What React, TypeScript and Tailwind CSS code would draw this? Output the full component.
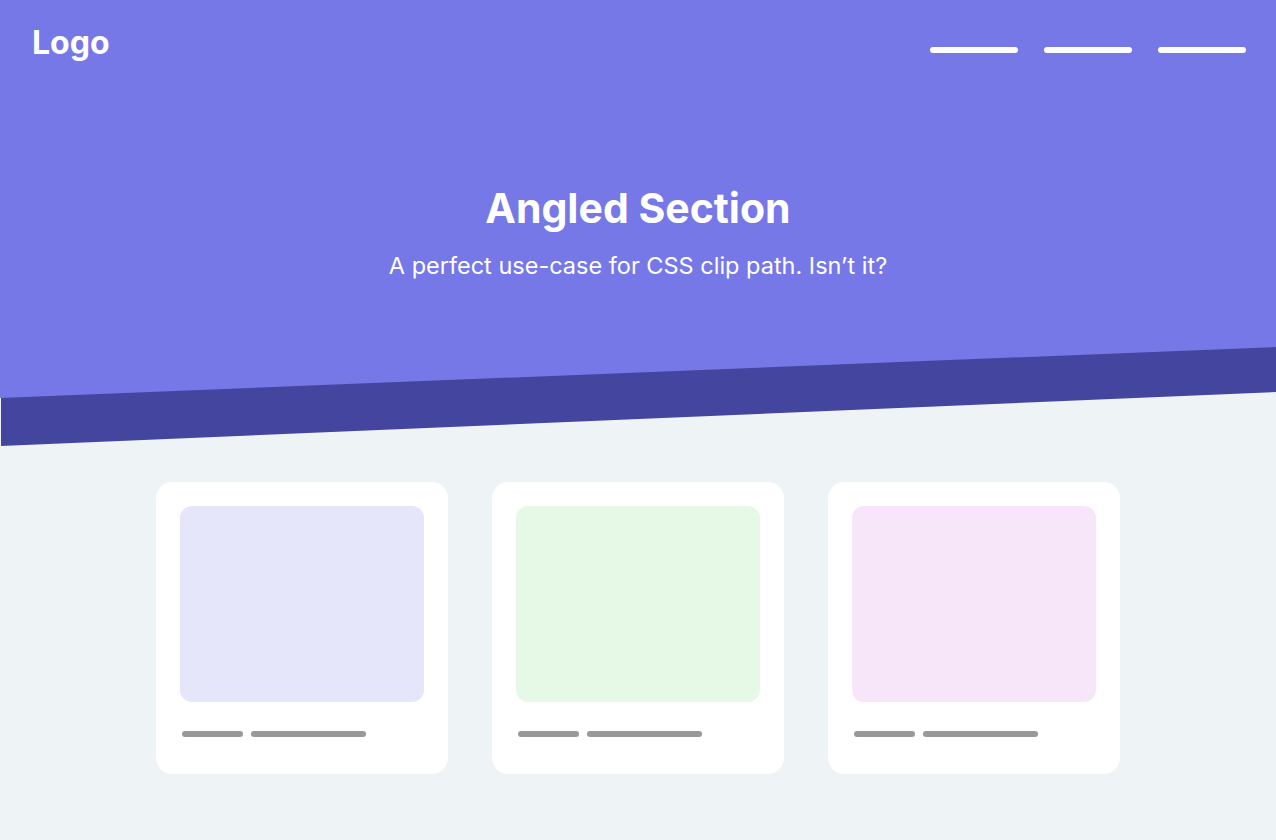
const cards = [
  { id: 1, tint: 'bg-[#e5e6f9]' },
  { id: 2, tint: 'bg-[#e6f9e6]' },
  { id: 3, tint: 'bg-[#f7e6f9]' },
];

function Card({ tint }: { tint: string }) {
  return (
    <div className="w-[292px] h-[292px] rounded-2xl bg-white p-6">
      <div className={`h-[196px] rounded-xl ${tint}`} />
      <div className="mt-[29px] flex items-center gap-2 pl-[2px]">
        <span className="h-[6px] w-[61px] rounded-full bg-[#999999]" />
        <span className="h-[6px] w-[115px] rounded-full bg-[#999999]" />
      </div>
    </div>
  );
}

export default function App() {
  return (
    <div className="min-h-screen bg-[#eef3f6] font-['Inter','Noto_Sans',sans-serif]">
      {/* Dark band behind the angled hero */}
      <div className="h-[446px] bg-[#44459e] [clip-path:polygon(0_0,100%_0,100%_392px,1px_446px,1px_398px,0_398px)]">
        <div className="h-[446px] bg-[#7678e8] [clip-path:polygon(0_0,100%_0,100%_347px,0_398px)]">
          <header className="flex items-start justify-between pl-8 pr-[30px] pt-[27px]">
            <span className="text-[32px] leading-none font-bold text-white">Logo</span>
            <nav className="mt-[20px] flex gap-[26px]">
              <span className="h-[6px] w-[88px] rounded-full bg-white" />
              <span className="h-[6px] w-[88px] rounded-full bg-white" />
              <span className="h-[6px] w-[88px] rounded-full bg-white" />
            </nav>
          </header>

          <div className="mt-[125px] text-center text-white">
            <h1 className="text-[41px] leading-[48px] font-bold">Angled Section</h1>
            <p className="mt-[18px] text-[23.5px] leading-[32px]">
              A perfect use-case for CSS clip path. Isn’t it?
            </p>
          </div>
        </div>
      </div>

      <div className="mt-9 flex justify-center gap-11">
        {cards.map(card => (
          <Card key={card.id} tint={card.tint} />
        ))}
      </div>
    </div>
  );
}
